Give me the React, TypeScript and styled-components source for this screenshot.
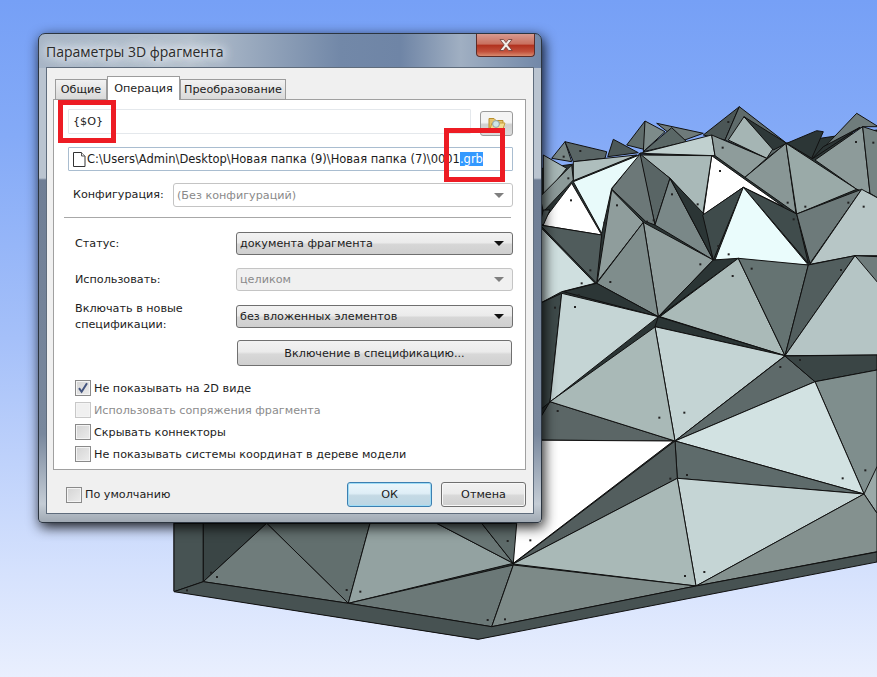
import styled, { createGlobalStyle } from "styled-components";

// coordinates below were read off zoomed crops, so each group keeps its crop origin
const crop = (ox: number, oy: number, pts: number[]) =>
  pts.map((v, i) => (i % 2 ? oy + v / 3 : ox + v / 3).toFixed(1)).join(" ");
const top = (pts: number[]) => crop(540, 90, pts);
const low = (pts: number[]) => crop(540, 370, pts);
const base = (pts: number[]) => crop(150, 510, pts);

const facets: [string, string][] = [
  // dark backing so no sky shows between facets
  ["530 170 640 155 740 150 877 130 877 552 478 639 174 591 174 520", "#2b3535"],
  // back row
  [top([10, 195, 80, 235, 10, 320]), "#a7b7b6"],
  [top([35, 205, 75, 155, 95, 215]), "#778584"],
  [top([75, 155, 200, 185, 195, 205, 100, 215]), "#596565"],
  [top([203, 200, 220, 148, 295, 188]), "#4c5858"],
  [top([350, 100, 490, 130, 420, 155]), "#6e7a7a"],
  [top([260, 165, 315, 93, 320, 180]), "#606d6c"],
  [top([315, 93, 375, 125, 310, 185]), "#7d8b8a"],
  [top([310, 185, 395, 113, 440, 155]), "#5a6766"],
  [top([490, 135, 598, 50, 555, 150]), "#4b5656"],
  [top([555, 150, 598, 50, 740, 160, 680, 205]), "#5f6b6b"],
  [top([565, 150, 612, 80, 700, 175, 680, 205]), "#a5b5b4"],
  [top([612, 80, 740, 160, 700, 180]), "#2e3838"],
  [top([740, 160, 830, 122, 850, 125, 815, 205]), "#2c3636"],
  [top([850, 175, 950, 70, 1015, 110, 968, 110]), "#6f7c7c"],
  [top([815, 208, 850, 170, 960, 112]), "#2b3434"],
  [top([825, 210, 968, 110, 990, 310, 950, 298]), "#8d9b9a"],
  [top([968, 110, 1015, 125, 1015, 325, 990, 310]), "#768483"],
  // second row
  [top([300, 190, 515, 135, 525, 197]), "#c0d0cf"],
  [top([515, 135, 680, 205, 615, 262, 525, 197]), "#8e9c9b"],
  [top([615, 262, 738, 160, 768, 370]), "#899796"],
  [top([738, 160, 950, 298, 770, 372]), "#9aaaa8"],
  [top([515, 197, 490, 375, 610, 292, 730, 350]), "#ffffff"],
  [top([300, 195, 515, 197, 488, 375, 390, 265]), "#a9b9b8"],
  [top([298, 190, 390, 265, 345, 405]), "#596565"],
  [top([300, 190, 215, 297, 318, 395, 345, 405]), "#6c7878"],
  [top([390, 265, 520, 510, 345, 405]), "#7a8888"],
  [top([390, 265, 490, 370, 520, 510]), "#2b3535"],
  [top([100, 215, 290, 195, 100, 272]), "#aebebd"],
  [top([100, 275, 298, 195, 215, 295, 185, 430]), "#e8fafa"],
  [top([95, 225, 100, 270, 10, 365, 0, 320]), "#8c9a99"],
  [top([0, 405, 95, 280, 185, 435]), "#ffffff"],
  [top([0, 400, 10, 360, 30, 360, 10, 405]), "#5f6b6b"],
  [top([488, 375, 610, 292, 520, 510]), "#3f4b4b"],
  [top([610, 292, 770, 372, 805, 520]), "#404c4c"],
  [top([610, 292, 805, 525, 525, 510]), "#eafcfc"],
  [top([770, 372, 965, 298, 810, 520]), "#6d7a7a"],
  [top([810, 523, 965, 298, 1015, 325, 1015, 497, 945, 497]), "#b7c6c6"],
  // third row
  [top([215, 300, 310, 397, 172, 575]), "#8f9d9c"],
  [top([0, 405, 185, 435, 170, 580]), "#505c5c"],
  [top([0, 410, 165, 580, 65, 605, 0, 640]), "#cfdfdf"],
  [top([310, 397, 520, 510, 355, 680]), "#919f9e"],
  [top([310, 397, 355, 680, 170, 580]), "#7f8d8c"],
  [top([520, 510, 595, 505, 355, 680]), "#2b3535"],
  [top([360, 680, 595, 505, 735, 797]), "#aabab8"],
  [top([595, 505, 805, 525, 735, 797]), "#657372"],
  [top([805, 525, 945, 497, 735, 797]), "#525e5e"],
  [top([945, 497, 1015, 560, 1015, 795, 735, 797]), "#b5c5c5"],
  [top([945, 497, 1015, 500, 1015, 580]), "#6f7c7c"],
  // fourth row
  [top([70, 605, 170, 580, 355, 680]), "#2c3636"],
  [top([0, 640, 65, 610, 30, 936, 0, 960]), "#3e4a4a"],
  [top([65, 610, 355, 680, 30, 936]), "#c5d5d5"],
  [top([355, 680, 735, 797, 345, 710]), "#2b3535"],
  [top([345, 710, 735, 797, 405, 1053]), "#c4d4d4"],
  [low([-30, 195, 30, 95, 405, 213, -30, 210]), "#5b6666"],
  [low([30, 95, 345, -129, 405, 213]), "#a9b9b7"],
  [low([405, 213, 735, -42, 825, 35]), "#5e6a6a"],
  [low([735, -42, 1011, -45, 1011, 0, 825, 35]), "#3a4545"],
  [low([825, 35, 1011, 0, 1011, 370, 972, 372]), "#7f8e8d"],
  [low([405, 213, 825, 35, 972, 372]), "#d2e2e2"],
  [low([972, 372, 1011, 290, 1011, 430]), "#9aa9a8"],
  // lower skirt side
  [low([-100, 210, 400, 213, -80, 580]), "#ffffff"],
  [low([405, 213, 972, 372, 412, 325]), "#5e6b6b"],
  [low([405, 213, 412, 325, -81, 582]), "#535e5e"],
  [low([412, 325, 972, 372, 468, 648]), "#c5d5d5"],
  [low([468, 648, 972, 372, 1011, 430, 1011, 545]), "#84918f"],
  [low([412, 325, 468, 648, -81, 582]), "#a9b9b7"],
  [base([72, 40, 160, 40, 160, 215, 72, 245]), "#475353"],
  [base([160, 40, 350, 40, 160, 215]), "#3a4545"],
  [base([350, 40, 660, 40, 595, 280]), "#626f6e"],
  [base([160, 215, 350, 40, 595, 280]), "#6f7c7b"],
  [base([660, 40, 860, 40, 1090, 160, 595, 280]), "#93a2a1"],
  [base([860, 40, 995, 40, 1090, 160]), "#697675"],
  [base([995, 40, 1100, 40, 1090, 160]), "#5d6a69"],
  [base([595, 280, 1090, 165, 1025, 350]), "#6b7877"],
  [base([1090, 165, 1638, 228, 1025, 350]), "#7d8a88"],
  // bottom lip
  [base([72, 245, 160, 215, 595, 280, 1025, 350, 1638, 228, 2181, 126, 2181, 156, 985, 388]), "#475252"],
];

const specks: [number, number, number, number][] = [
  ...[
    [118, 180], [68, 197], [82, 262], [90, 328], [190, 395], [228, 343], [318, 392], [338, 388], [393, 310],
    [470, 340], [537, 240], [545, 170], [562, 93], [740, 335], [793, 347], [758, 385], [922, 335], [968, 347],
    [945, 153], [997, 155], [563, 490], [532, 465], [478, 520], [575, 555], [632, 533], [900, 537], [208, 573],
    [148, 538], [122, 577], [102, 648], [42, 650], [113, 612], [777, 807], [718, 828],
  ].map(([x, y]) => [540, 90, x, y] as [number, number, number, number]),
  ...[
    [50, 120], [355, 140], [430, 125], [388, 323], [438, 312], [905, 322], [973, 298], [432, 615], [490, 603],
  ].map(([x, y]) => [540, 370, x, y] as [number, number, number, number]),
  ...[
    [180, 185], [198, 198], [108, 238], [587, 237], [628, 242], [1010, 327], [1062, 325], [1070, 90], [1138, 88],
  ].map(([x, y]) => [150, 510, x, y] as [number, number, number, number]),
];

const GlobalStyle = createGlobalStyle`
  html, body {
    margin: 0;
    padding: 0;
    background: #fff;
  }
`;

const Page = styled.div`
  position: relative;
  width: 877px;
  height: 677px;
  overflow: hidden;
  font-family: "DejaVu Sans", sans-serif;
  font-size: 11.2px;
  color: #1c1c1c;
  background: linear-gradient(180deg, #76a0f6 0%, #84aaf7 20%, #a5c0f9 50%, #d6e2fd 85%, #e9effe 100%);
`;

const Scene = styled.svg`
  position: absolute;
  inset: 0;
`;

const Window = styled.div`
  position: absolute;
  left: 38px;
  top: 33px;
  width: 504px;
  height: 490px;
  box-sizing: border-box;
  padding: 0 7px 8px;
  display: flex;
  flex-direction: column;
  border: 1px solid #2c3540;
  border-radius: 7px 7px 4px 4px;
  box-shadow: 2px 4px 13px rgba(0, 0, 0, 0.9);
  background:
    linear-gradient(90deg, #a7b5c6 0%, #b4c0cd 30%, #7288a8 60%, #6f85a6 72%, #a0afc2 84%, #7288a8 100%) top / 100% 34px no-repeat,
    linear-gradient(180deg, #bac4d0 0, #bac4d0 144px, #6f7e95 146px, #79889d 400px, #c4ccd5 470px, #a0a9b3 100%);
`;

const TitleBar = styled.div`
  flex: none;
  height: 33px;
  display: flex;
  align-items: flex-start;
  justify-content: space-between;
`;

const Title = styled.div`
  margin-top: 8px;
  font-family: "Open Sans", sans-serif;
  font-size: 14px;
  line-height: 20px;
  color: #2a2a2a;
  text-shadow: 0 0 6px #e6eaef, 0 0 10px #e6eaef, 0 0 14px #e6eaef, 0 0 14px #e6eaef;
`;

const CloseButton = styled.div`
  width: 59px;
  height: 23px;
  margin-right: -1px;
  display: flex;
  align-items: center;
  justify-content: center;
  box-sizing: border-box;
  border: 1px solid #5c2c28;
  border-top: 0;
  border-radius: 0 0 4px 4px;
  background: linear-gradient(180deg, #d79a90 0%, #c9705f 45%, #b2321f 52%, #c2513c 80%, #d98a6e 100%);
`;

const Client = styled.div`
  flex: 1;
  position: relative;
  box-sizing: border-box;
  padding: 9px 9px 0 6px;
  display: flex;
  flex-direction: column;
  background: #f0f0f0;
  border: 1px solid #5f6c7c;
`;

const TabRow = styled.div`
  display: flex;
  align-items: flex-end;
  height: 23px;
  padding-left: 2px;
  margin-bottom: -1px;
  z-index: 1;
`;

const Tab = styled.div<{ $active?: boolean; $w: number }>`
  width: ${(p) => p.$w}px;
  box-sizing: border-box;
  height: ${(p) => (p.$active ? 24 : 21)}px;
  display: flex;
  align-items: center;
  justify-content: center;
  border: 1px solid #9c9c9c;
  border-bottom: ${(p) => (p.$active ? "0" : "1px solid #9c9c9c")};
  background: ${(p) => (p.$active ? "#fff" : "linear-gradient(180deg, #f2f2f2, #d9d9d9)")};
`;

const Panel = styled.div`
  box-sizing: border-box;
  width: 473px;
  height: 371px;
  padding: 9px 12px 0 14px;
  border: 1px solid #a0a0a0;
  background: #fff;
  display: flex;
  flex-direction: column;
`;

const NameRow = styled.div`
  display: flex;
  align-items: flex-start;
  gap: 9px;
  height: 38px;
`;

const TextField = styled.div`
  box-sizing: border-box;
  height: 25px;
  flex: 1;
  display: flex;
  align-items: center;
  padding-left: 4px;
  border: 1px solid #e4e8ec;
  border-radius: 1px;
  white-space: pre;
`;

const PathField = styled(TextField)`
  flex: none;
  height: 24px;
  padding-left: 2px;
  border-color: #a9bdd0;
  font-size: 11.5px;
`;

const Selected = styled.span`
  background: #3399ff;
  color: #fff;
`;

const FolderButton = styled.div`
  flex: none;
  width: 33px;
  height: 25px;
  margin-top: 2px;
  box-sizing: border-box;
  display: flex;
  align-items: center;
  justify-content: center;
  border: 1px solid #9a9a9a;
  border-radius: 3px;
  background: linear-gradient(180deg, #f4f4f4 45%, #d0d0d0 55%, #dcdcdc 100%);
`;

const Row = styled.div<{ $h: number; $mt?: number }>`
  display: flex;
  align-items: center;
  height: ${(p) => p.$h}px;
  margin-top: ${(p) => p.$mt ?? 0}px;
`;

const Label = styled.div<{ $w: number; $ml?: number }>`
  flex: none;
  width: ${(p) => p.$w}px;
  margin-left: ${(p) => p.$ml ?? 7}px;
  line-height: 16px;
`;

const Select = styled.div<{ $disabled?: boolean; $flat?: boolean }>`
  flex: 1;
  height: 100%;
  box-sizing: border-box;
  display: flex;
  align-items: center;
  justify-content: space-between;
  padding: 0 8px 0 3px;
  border-radius: 3px;
  border: 1px solid ${(p) => (p.$disabled ? "#c4c4c4" : "#6f6f6f")};
  color: ${(p) => (p.$disabled ? "#8a8a8a" : "#1c1c1c")};
  background: ${(p) =>
    p.$flat
      ? "#fff"
      : p.$disabled
        ? "#f0f0f0"
        : "linear-gradient(180deg, #f2f2f2 0%, #ebebeb 45%, #d6d6d6 55%, #cfcfcf 100%)"};
`;

const Arrow = styled.span<{ $disabled?: boolean }>`
  width: 0;
  height: 0;
  border-left: 5px solid transparent;
  border-right: 5px solid transparent;
  border-top: 5px solid ${(p) => (p.$disabled ? "#7f7f7f" : "#111")};
`;

const Divider = styled.div`
  height: 1px;
  margin: 10px 2px 14px -4px;
  background: #a8a8a8;
`;

const WideButton = styled.div`
  box-sizing: border-box;
  height: 26px;
  margin: 12px 1px 0 169px;
  display: flex;
  align-items: center;
  justify-content: center;
  border: 1px solid #707070;
  border-radius: 3px;
  background: linear-gradient(180deg, #f2f2f2 0%, #ebebeb 45%, #d8d8d8 55%, #cfcfcf 100%);
`;

const Checks = styled.div`
  display: flex;
  flex-direction: column;
  gap: 6px;
  margin-top: 14px;
  margin-left: 7px;
`;

const CheckRow = styled.div<{ $disabled?: boolean }>`
  display: flex;
  align-items: center;
  gap: 3px;
  height: 16px;
  color: ${(p) => (p.$disabled ? "#8c8c8c" : "#1c1c1c")};
`;

const Box = styled.div<{ $disabled?: boolean }>`
  flex: none;
  width: 16px;
  height: 16px;
  box-sizing: border-box;
  display: flex;
  align-items: center;
  justify-content: center;
  border: 1px solid ${(p) => (p.$disabled ? "#c8c8c8" : "#8a8a8a")};
  box-shadow: inset 0 0 0 1px #f4f4f4;
  background: ${(p) => (p.$disabled ? "#f0f0f0" : "linear-gradient(135deg, #d4d4d4, #ececec)")};
`;

const Footer = styled.div`
  display: flex;
  align-items: center;
  height: 25px;
  margin-top: 12px;
  padding-left: 13px;
`;

const DefaultCheck = styled(CheckRow)`
  flex: 1;
`;

const DialogButton = styled.div<{ $primary?: boolean }>`
  box-sizing: border-box;
  width: 85px;
  height: 25px;
  margin-right: ${(p) => (p.$primary ? 9 : -2)}px;
  display: flex;
  align-items: center;
  justify-content: center;
  border-radius: 3px;
  border: 1px solid ${(p) => (p.$primary ? "#3c7fb1" : "#707070")};
  box-shadow: ${(p) => (p.$primary ? "inset 0 0 0 1px #9fdcf5" : "inset 0 0 0 1px #f8f8f8")};
  background: ${(p) =>
    p.$primary
      ? "linear-gradient(180deg, #eaf6fc 0%, #dfeef6 45%, #c4d9e4 55%, #bcd6e4 100%)"
      : "linear-gradient(180deg, #f2f2f2 0%, #ebebeb 45%, #d8d8d8 55%, #cfcfcf 100%)"};
`;

const Marker = styled.div<{ $x: number; $y: number; $w: number; $h: number }>`
  position: absolute;
  left: ${(p) => p.$x}px;
  top: ${(p) => p.$y}px;
  width: ${(p) => p.$w}px;
  height: ${(p) => p.$h}px;
  box-sizing: border-box;
  border: 5px solid #ed1c24;
`;

const FileGlyph = styled.svg`
  flex: none;
`;

const FileIcon = () => (
  <FileGlyph width="16" height="17" viewBox="0 0 16 17">
    <path d="M2.5 1.5h8l3.5 3.5v10.5h-11.5z" fill="#fff" stroke="#333" />
    <path d="M10.5 1.5v3.5h3.5" fill="#e8e8e8" stroke="#555" />
  </FileGlyph>
);

const FolderIcon = () => (
  <svg width="18" height="17" viewBox="0 0 18 17">
    <path d="M1 14V3.5h5l2 2h7V14z" fill="#e3c26d" stroke="#b98f2e" />
    <path d="M2 14l2-6h13l-2 6z" fill="#f4dc92" stroke="#c79f3e" />
    <circle cx="8" cy="9" r="3.4" fill="#cfe6e8" stroke="#8ea3a6" />
  </svg>
);

const CheckMark = () => (
  <svg width="12" height="12" viewBox="0 0 12 12">
    <path d="M2 6.2l2.6 3.6L10 1.2" fill="none" stroke="#44557f" strokeWidth="2" />
  </svg>
);

const CloseX = () => (
  <svg width="20" height="14" viewBox="0 0 20 14">
    <path d="M4 1.5h3.6L10 4.6l2.4-3.1H16l-4.2 5.4 4.4 5.6h-3.6L10 9.2l-2.6 3.3H3.8l4.4-5.6z" fill="#f2eeea" stroke="#6a3a34" strokeWidth="0.8" />
  </svg>
);

const App = () => {
  return (
    <Page>
      <GlobalStyle />
      <Scene width="877" height="677" viewBox="0 0 877 677">
        {facets.map(([points, fill], i) => (
          <polygon key={i} points={points} fill={fill} stroke="#111" strokeWidth="1" strokeLinejoin="round" />
        ))}
        {specks.map(([ox, oy, x, y], i) => (
          <rect key={i} x={ox + x / 3} y={oy + y / 3} width="2" height="2" fill="#222" />
        ))}
      </Scene>

      <Window>
        <TitleBar>
          <Title>Параметры 3D фрагмента</Title>
          <CloseButton>
            <CloseX />
          </CloseButton>
        </TitleBar>
        <Client>
          <TabRow>
            <Tab $w={52}>Общие</Tab>
            <Tab $w={73} $active>
              Операция
            </Tab>
            <Tab $w={106}>Преобразование</Tab>
          </TabRow>
          <Panel>
            <NameRow>
              <TextField>{"{$O}"}</TextField>
              <FolderButton>
                <FolderIcon />
              </FolderButton>
            </NameRow>
            <PathField>
              <FileIcon />
              C:\Users\Admin\Desktop\Новая папка (9)\Новая папка (7)\0001<Selected>.grb</Selected>
            </PathField>
            <Row $h={24} $mt={12}>
              <Label $w={100} $ml={5}>Конфигурация:</Label>
              <Select $disabled $flat>
                (Без конфигураций)
                <Arrow $disabled />
              </Select>
            </Row>
            <Divider />
            <Row $h={23}>
              <Label $w={161}>Статус:</Label>
              <Select>
                документа фрагмента
                <Arrow />
              </Select>
            </Row>
            <Row $h={23} $mt={13}>
              <Label $w={161}>Использовать:</Label>
              <Select $disabled>
                целиком
                <Arrow $disabled />
              </Select>
            </Row>
            <Row $h={23} $mt={14}>
              <Label $w={161}>
                Включать в новые
                <br />
                спецификации:
              </Label>
              <Select>
                без вложенных элементов
                <Arrow />
              </Select>
            </Row>
            <WideButton>Включение в спецификацию...</WideButton>
            <Checks>
              <CheckRow>
                <Box>
                  <CheckMark />
                </Box>
                Не показывать на 2D виде
              </CheckRow>
              <CheckRow $disabled>
                <Box $disabled />
                Использовать сопряжения фрагмента
              </CheckRow>
              <CheckRow>
                <Box />
                Скрывать коннекторы
              </CheckRow>
              <CheckRow>
                <Box />
                Не показывать системы координат в дереве модели
              </CheckRow>
            </Checks>
          </Panel>
          <Footer>
            <DefaultCheck>
              <Box />
              По умолчанию
            </DefaultCheck>
            <DialogButton $primary>ОК</DialogButton>
            <DialogButton>Отмена</DialogButton>
          </Footer>
        </Client>
      </Window>

      <Marker $x={58} $y={100} $w={58} $h={43} />
      <Marker $x={444} $y={128} $w={61} $h={54} />
    </Page>
  );
};

export default App;
